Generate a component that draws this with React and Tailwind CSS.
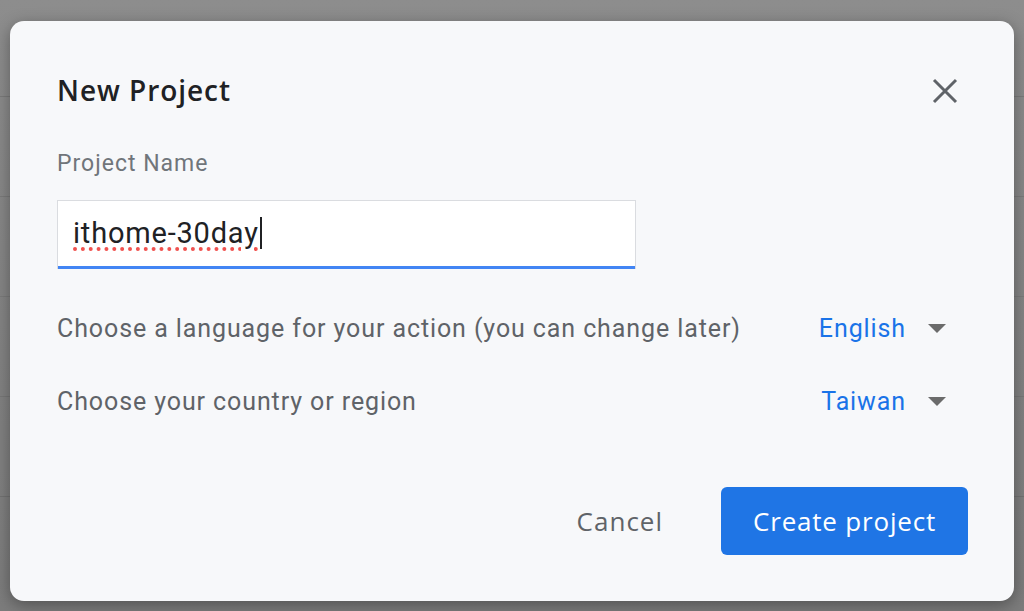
import React from "react";

function Caret() {
  return (
    <svg width="18" height="10" viewBox="0 0 18 10" className="shrink-0">
      <path d="M0 0 L18 0 L9 9 Z" fill="#6b6b6b" />
    </svg>
  );
}

function SelectRow({ label, value }) {
  return (
    <div className="flex h-[40px] items-center justify-between pr-[68px]">
      <span className="text-[25px] tracking-[0.9px] text-[#5f6368]" style={{ fontFamily: "Roboto, sans-serif" }}>
        {label}
      </span>
      <div className="flex items-center gap-[22px]">
        <span className="text-[25px] tracking-[0.9px] text-[#1a73e8]" style={{ fontFamily: "Roboto, sans-serif" }}>
          {value}
        </span>
        <Caret />
      </div>
    </div>
  );
}

export default function App() {
  return (
    <div className="relative h-[611px] w-[1024px] overflow-hidden bg-gradient-to-b from-[#8d8d8d] to-[#7c7c7c]">
      <div className="flex flex-col">
        <div className="h-[97px] border-b border-[#7a7a7a]" />
        <div className="h-[100px] border-b border-[#7a7a7a]" />
        <div className="h-[100px] border-b border-[#7a7a7a]" />
        <div className="h-[100px] border-b border-[#777777]" />
        <div className="h-[100px] border-b border-[#727272]" />
      </div>

      <div
        className="absolute left-[10px] top-[21px] flex h-[580px] w-[1004px] flex-col rounded-[14px] bg-[#f7f8fa] pl-[47px] pt-[49px] shadow-[0_4px_16px_rgba(0,0,0,0.35)]"
        style={{ fontFamily: "Roboto, sans-serif" }}
      >
        <div className="flex h-[40px] items-center justify-between pr-[56px]">
          <h1
            className="text-[28px] font-semibold tracking-[0.95px] text-[#202124]"
            style={{ fontFamily: "'Open Sans', sans-serif" }}
          >
            New Project
          </h1>
          <svg width="26" height="26" viewBox="0 0 26 26" className="translate-y-[1px]">
            <path d="M2 2 L24 24 M24 2 L2 24" stroke="#5f6368" strokeWidth="3" />
          </svg>
        </div>

        <div className="mt-[40px] h-[28px] text-[23px] leading-[28px] tracking-[1px] text-[#70757a]">Project Name</div>

        <div className="mt-[22px] flex h-[69px] w-[579px] items-center border border-b-0 border-[#dadce0] bg-white pb-[4px] pl-[15px] shadow-[inset_0_-3px_0_#4285f4]">
          <span className="text-[29px] tracking-[0.8px] text-[#202124]">
            <span className="underline decoration-dotted decoration-[#f0524f] decoration-[4px] underline-offset-[5px]">
              ithome-30day
            </span>
            <span className="ml-[1px] inline-block h-[32px] w-[2px] translate-y-[6px] bg-[#202124]" />
          </span>
        </div>

        <div className="mt-[40px]">
          <SelectRow label="Choose a language for your action (you can change later)" value="English" />
        </div>
        <div className="mt-[33px]">
          <SelectRow label="Choose your country or region" value="Taiwan" />
        </div>

        <div
          className="mt-[65px] flex items-center justify-end gap-[58px] pr-[46px]"
          style={{ fontFamily: "'Open Sans', sans-serif" }}
        >
          <button className="text-[26px] font-medium tracking-[1px] text-[#5f6368]">Cancel</button>
          <button className="h-[68px] w-[247px] rounded-[6px] bg-[#1f75e5] text-[26px] font-medium tracking-[0.8px] text-white">
            Create project
          </button>
        </div>
      </div>
    </div>
  );
}
